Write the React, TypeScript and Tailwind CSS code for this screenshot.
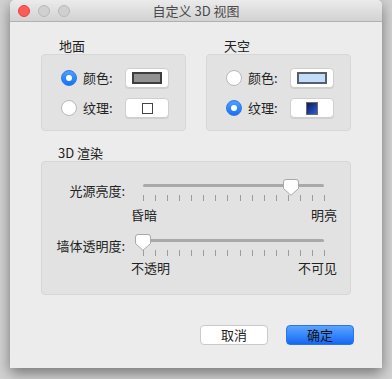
const ticks = Array.from({ length: 16 }, (_, i) => i);

const Radio = ({ on }: { on: boolean }) =>
  on ? (
    <div className="w-4 h-4 rounded-full bg-gradient-to-b from-[#4da0fd] to-[#1670f5] border border-[#2a78e8] flex items-center justify-center">
      <div className="w-[6px] h-[6px] rounded-full bg-white" />
    </div>
  ) : (
    <div className="w-4 h-4 rounded-full bg-white border border-[#b8b8b8]" />
  );

const SwatchButton = ({ children }: { children: React.ReactNode }) => (
  <div className="w-[44px] h-[20px] bg-white rounded-[4px] border border-[#cfcfcf] shadow-[0_1px_0_rgba(0,0,0,0.08)] flex items-center justify-center">
    {children}
  </div>
);

const Row = ({ on, label, children }: { on: boolean; label: string; children: React.ReactNode }) => (
  <div className="flex items-center h-[20px]">
    <Radio on={on} />
    <span className="ml-[6px] w-[42px] text-[13px] leading-4 text-[#222]">{label}</span>
    <SwatchButton>{children}</SwatchButton>
  </div>
);

const Group = ({ title, children }: { title: string; children: React.ReactNode }) => (
  <div className="flex flex-col w-[145px]">
    <div className="pl-[18px] text-[13px] leading-4 text-[#222]">{title}</div>
    <div className="h-[77px] bg-[#e2e2e2] border border-[#d7d7d7] rounded-[4px] pt-[13px] pl-[19px] flex flex-col gap-[10px]">
      {children}
    </div>
  </div>
);

const Thumb = () => (
  <svg width="16" height="17" viewBox="0 0 16 17">
    <path
      d="M3 0.5 H13 Q15.5 0.5 15.5 3 V9.5 L8 16.3 L0.5 9.5 V3 Q0.5 0.5 3 0.5 Z"
      fill="#fff"
      stroke="#a9a9a9"
      strokeWidth="1"
    />
  </svg>
);

const Slider = ({
  label,
  pct,
  left,
  right,
  gap,
}: {
  label: string;
  pct: number;
  left: string;
  right: string;
  gap: string;
}) => (
  <div className="flex items-start">
    <div className="w-[83px] mt-[4px] text-right text-[13px] leading-4 text-[#222]">{label}</div>
    <div className="ml-[6px] w-[206px] flex flex-col">
      <div className="relative h-[12px] px-[12px] flex items-center">
        <div className="w-[181px] h-[3px] rounded-full bg-[#a9a9a9]" />
        <div className="absolute top-0" style={{ left: 12 + pct * 181 - 8 }}>
          <Thumb />
        </div>
      </div>
      <div className="mt-[4px] h-[6px] pl-[12px] flex">
        {ticks.map((t) => (
          <div key={t} className="w-[12.07px] shrink-0">
            <div className="w-px h-[6px] bg-[#9c9c9c]" />
          </div>
        ))}
      </div>
      <div className={`${gap} flex justify-between text-[13px] leading-4 text-[#222]`}>
        <span>{left}</span>
        <span>{right}</span>
      </div>
    </div>
  </div>
);

export default function App() {
  return (
    <div className="w-[392px] h-[379px] bg-[#d2d2d2] font-['Noto_Sans_CJK_SC',sans-serif] overflow-hidden">
      <div className="ml-[10px] w-[372px] h-[368px] bg-[#ececec] rounded-t-[5px] shadow-[0_5px_14px_rgba(0,0,0,0.45)] flex flex-col">
        <div className="h-[22px] rounded-t-[5px] bg-gradient-to-b from-[#ebebeb] to-[#d2d2d2] border-b border-[#b1b1b1] flex items-center relative">
          <div className="ml-[8px] flex gap-[8px]">
            <div className="w-3 h-3 rounded-full bg-[#fc5b57] border border-[#e2463f]" />
            <div className="w-3 h-3 rounded-full bg-[#d0d0d0] border border-[#b9b9b9]" />
            <div className="w-3 h-3 rounded-full bg-[#d0d0d0] border border-[#b9b9b9]" />
          </div>
          <div className="absolute inset-0 flex items-center justify-center text-[13px] text-[#4a4a4a]">
            自定义 3D 视图
          </div>
        </div>

        <div className="px-[31px] pt-[16px] flex flex-col">
          <div className="flex gap-[20px]">
            <Group title="地面">
              <Row on label="颜色:">
                <div className="w-[30px] h-[12px] bg-[#929292] border-2 border-[#3e3e3e]" />
              </Row>
              <Row on={false} label="纹理:">
                <div className="w-[11px] h-[11px] bg-white border-[1.5px] border-[#444]" />
              </Row>
            </Group>
            <Group title="天空">
              <Row on={false} label="颜色:">
                <div className="w-[30px] h-[12px] bg-[#c3dcfa] border-2 border-[#585e6c]" />
              </Row>
              <Row on label="纹理:">
                <div className="w-[12px] h-[13px] bg-gradient-to-br from-[#0c1a58] via-[#1d3c98] to-[#2f62d4] border-[1.5px] border-[#6b6b6b]" />
              </Row>
            </Group>
          </div>

          <div className="mt-[14px] pl-[17px] text-[13px] leading-4 text-[#222]">3D 渲染</div>
          <div className="h-[134px] bg-[#e2e2e2] border border-[#d7d7d7] rounded-[4px] pt-[17px] flex flex-col gap-[11px]">
            <Slider label="光源亮度:" pct={0.82} left="昏暗" right="明亮" gap="mt-[6px]" />
            <Slider label="墙体透明度:" pct={0} left="不透明" right="不可见" gap="mt-[4px]" />
          </div>

          <div className="mt-[30px] flex justify-end gap-[18px]">
            <div className="w-[68px] h-[20px] bg-white border border-[#c9c9c9] rounded-[4px] flex items-center justify-center text-[13px] text-[#222]">
              取消
            </div>
            <div className="-mr-[3px] w-[68px] h-[20px] rounded-[4px] bg-gradient-to-b from-[#5aa3fd] to-[#1467f5] border border-[#2e74e6] flex items-center justify-center text-[13px] text-[#111]">
              确定
            </div>
          </div>
        </div>
      </div>
    </div>
  );
}
